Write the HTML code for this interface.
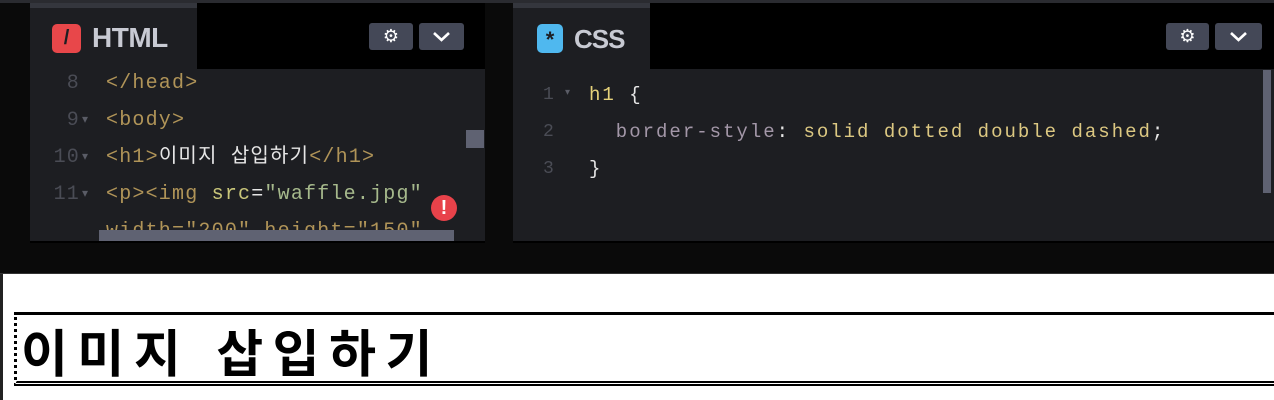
<!DOCTYPE html>
<html><head><meta charset="utf-8"><style>
*{margin:0;padding:0;box-sizing:border-box}
body{width:1274px;height:400px;overflow:hidden;background:#fff;position:relative;font-family:"Liberation Sans","Noto Sans CJK KR",sans-serif}
.a{position:absolute}
.code{font-family:"Liberation Mono","Noto Sans CJK KR",monospace;font-size:20px;letter-spacing:1.2px;white-space:pre;line-height:37px}
.ln{color:#4a4c55;text-align:right;width:50px}
.t{color:#b09458}.w{color:#e6e6e6}.at{color:#c9c67a}.s{color:#a6b98c}
.btn{background:#444857;border-radius:3px;height:27px}
</style></head><body>
<div class="a" style="left:0;top:0;width:1274px;height:274px;background:#0a0a0a"></div>
<div class="a" style="left:0;top:0;width:1274px;height:3px;background:#2a2b30"></div>
<!-- HTML panel -->
<div class="a" style="left:30px;top:3px;width:455px;height:240px;background:#000"></div>
<div class="a" style="left:30px;top:3px;width:167px;height:5px;background:#34363d"></div>
<div class="a" style="left:30px;top:8px;width:167px;height:62px;background:#1d1e22"></div>
<div class="a" style="left:30px;top:69px;width:455px;height:172px;background:#1d1e22;overflow:hidden">
 <div class="a code ln" style="left:0;top:-4px">8<br>9<br>10<br>11</div>
 <div class="a code" style="left:52px;top:-4px;color:#5a5c66;font-size:12px;line-height:37px">&nbsp;<br>▾<br>▾<br>▾</div>
 <div class="a code" style="left:76px;top:-4px"><span class="t">&lt;/head&gt;</span>
<span class="t">&lt;body&gt;</span>
<span class="t">&lt;h1&gt;</span><span class="w">이미지 삽입하기</span><span class="t">&lt;/h1&gt;</span>
<span class="t">&lt;p&gt;&lt;img </span><span class="at">src</span><span class="w">=</span><span class="s">"waffle.jpg"</span>
<span class="t">width="200" height="150"</span></div>
 <div class="a" style="left:436px;top:61px;width:18px;height:18px;background:#5f6272"></div>
 <div class="a" style="left:69px;top:161px;width:355px;height:11px;background:#5f6272"></div>
 <div class="a" style="left:401px;top:126px;width:26px;height:26px;border-radius:50%;background:#e8424a;color:#fff;font:bold 20px/26px 'Liberation Sans';text-align:center">!</div>
</div>
<div class="a" style="left:52px;top:24px;width:29px;height:29px;border-radius:5px;background:#e8474a;color:#1d1e22;font:bold 20px/29px 'Liberation Sans';text-align:center">/</div>
<div class="a" style="left:92px;top:21px;color:#c8cad3;font:bold 28px/34px 'Liberation Sans';letter-spacing:-0.5px">HTML</div>
<div class="a btn" style="left:369px;top:23px;width:44px;color:#fff;text-align:center;font:18px/27px 'DejaVu Sans'">⚙</div>
<div class="a btn" style="left:419px;top:23px;width:45px"><svg width="45" height="27"><path d="M15 10l7.5 7 7.5-7" stroke="#fff" stroke-width="2.6" fill="none"/></svg></div>
<!-- CSS panel -->
<div class="a" style="left:513px;top:3px;width:761px;height:240px;background:#000"></div>
<div class="a" style="left:513px;top:3px;width:137px;height:5px;background:#34363d"></div>
<div class="a" style="left:513px;top:8px;width:137px;height:62px;background:#1d1e22"></div>
<div class="a" style="left:513px;top:69px;width:761px;height:172px;background:#1d1e22">
 <div class="a code" style="left:30px;top:8px;color:#4a4c55;line-height:37px;font-size:18px">1<br>2<br>3</div>
 <div class="a" style="left:52px;top:18px;color:#5a5c66;font-size:10px">▾</div>
 <div class="a code" style="left:76px;top:8px;font-size:19px;line-height:37px;letter-spacing:2px"><span style="color:#e6d27a">h1 </span><span class="w">{</span>
<span style="color:#a397a8">  border-style</span><span class="w">: </span><span style="color:#dcc882">solid dotted double dashed</span><span class="w">;</span>
<span class="w">}</span></div>
 <div class="a" style="left:750px;top:1px;width:8px;height:123px;background:#5f6272"></div>
</div>
<div class="a" style="left:537px;top:24px;width:26px;height:29px;border-radius:5px;background:#4fb8ef;color:#1d1e22;font:bold 22px/32px 'Liberation Sans';text-align:center">*</div>
<div class="a" style="left:574px;top:22px;color:#c8cad3;font:bold 26px/34px 'Liberation Sans';letter-spacing:-1px">CSS</div>
<div class="a btn" style="left:1166px;top:23px;width:43px;color:#fff;text-align:center;font:18px/27px 'DejaVu Sans'">⚙</div>
<div class="a btn" style="left:1215px;top:23px;width:47px"><svg width="47" height="27"><path d="M16 10l7.5 7 7.5-7" stroke="#fff" stroke-width="2.6" fill="none"/></svg></div>
<!-- result -->
<div class="a" style="left:0;top:243px;width:1274px;height:31px;background:#0a0a0a;border-bottom:1px solid #333"></div>
<div class="a" style="left:0;top:274px;width:3px;height:126px;background:#222"></div>
<div class="a" style="left:14px;top:312px;width:1280px;height:74px;border-top:3px solid #000;border-left:3px dotted #000;border-bottom:5px double #000"></div>
<div class="a" style="left:21px;top:316px;font:bold 51px/68px 'Noto Sans CJK KR',sans-serif;color:#000;letter-spacing:9.5px;white-space:nowrap">이미지<span style="display:inline-block;width:26px"></span>삽입하기</div>
</body></html>
